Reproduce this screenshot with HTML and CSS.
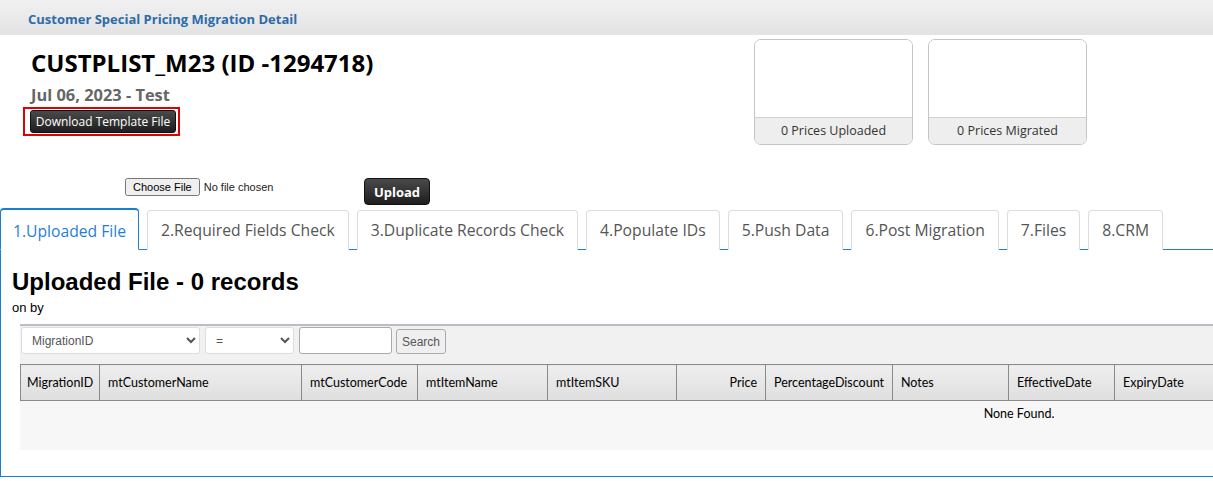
FILE: index.html
```html
<!DOCTYPE html>
<html lang="en">
<head>
  <meta charset="UTF-8">
  <title>Customer Special Pricing Migration Detail</title>
  <link rel="stylesheet" href="styles.css">
</head>
<body>
  <div class="page-header">Customer Special Pricing Migration Detail</div>

  <div class="summary">
    <div class="info">
      <h1 class="list-name">CUSTPLIST_M23 (ID -1294718)</h1>
      <div class="list-date">Jul 06, 2023 - Test</div>
      <div class="highlight">
        <button class="dark-btn small">Download Template File</button>
      </div>
    </div>
    <div class="stats">
      <div class="stat-box">
        <div class="stat-body"></div>
        <div class="stat-foot">0 Prices Uploaded</div>
      </div>
      <div class="stat-box">
        <div class="stat-body"></div>
        <div class="stat-foot">0 Prices Migrated</div>
      </div>
    </div>
  </div>

  <div class="upload-row">
    <input type="file" class="file-input">
    <button class="dark-btn upload">Upload</button>
  </div>

  <ul class="tabs">
    <li class="tab active">1.Uploaded File</li>
    <li class="tab">2.Required Fields Check</li>
    <li class="tab">3.Duplicate Records Check</li>
    <li class="tab">4.Populate IDs</li>
    <li class="tab">5.Push Data</li>
    <li class="tab">6.Post Migration</li>
    <li class="tab">7.Files</li>
    <li class="tab">8.CRM</li>
  </ul>

  <div class="tab-panel">
    <h2 class="panel-title">Uploaded File - 0 records</h2>
    <div class="panel-sub">on by</div>

    <div class="grid">
      <div class="filter-bar">
        <select class="field-select"><option>MigrationID</option></select>
        <select class="op-select"><option>=</option></select>
        <input type="text" class="search-input">
        <button class="search-btn">Search</button>
      </div>
      <table class="data-table">
        <thead>
          <tr>
            <th style="width:79px">MigrationID</th>
            <th style="width:202px">mtCustomerName</th>
            <th style="width:116px">mtCustomerCode</th>
            <th style="width:130px">mtItemName</th>
            <th style="width:129px">mtItemSKU</th>
            <th class="num" style="width:89px">Price</th>
            <th style="width:127px">PercentageDiscount</th>
            <th style="width:116px">Notes</th>
            <th style="width:106px">EffectiveDate</th>
            <th>ExpiryDate</th>
          </tr>
        </thead>
        <tbody>
          <tr><td colspan="10" class="empty">None Found.</td></tr>
        </tbody>
      </table>
    </div>
  </div>
</body>
</html>
```

FILE: styles.css
```css
* { box-sizing: border-box; }
body {
  margin: 0; width: 1213px; overflow: hidden;
  font-family: "Open Sans", "Liberation Sans", sans-serif;
  color: #222; background: #fff;
}

/* top title strip */
.page-header {
  height: 35px; padding: 10px 0 0 28px;
  background: linear-gradient(#f1f1f1, #e3e3e3);
  color: #2d6ca8; font-weight: bold; font-size: 13px;
}

/* name, date and counters */
.summary { display: flex; height: 143px; }
.info { width: 754px; padding: 13px 0 0 23px; }
.list-name {
  margin: 0 0 0 8px; font-size: 24px; line-height: 30px; font-weight: bold; color: #000;
}
.list-date {
  margin: 8px 0 0 8px; font-size: 16.4px; font-weight: bold; color: #666; line-height: 18px;
}
.highlight {
  display: inline-block; margin-top: 3px; padding: 1px 2px 1px 5px;
  border: 2px solid #e00000;
}
.dark-btn {
  background: linear-gradient(#4a4a4a, #1e1e1e);
  color: #fff; border: 1px solid #111; border-radius: 3px;
  font-family: "Open Sans", sans-serif; cursor: pointer;
}
.dark-btn.small { display: block; font-size: 12px; height: 23px; width: 146px; padding: 0; }

.stats { display: flex; gap: 15px; padding-top: 4px; }
.stat-box {
  width: 159px; height: 106px; display: flex; flex-direction: column;
  border: 1px solid #c4c4c4; border-radius: 7px; overflow: hidden;
}
.stat-body { flex: 1; background: #fff; }
.stat-foot {
  height: 27px; line-height: 25px; text-align: center;
  background: #eee; border-top: 1px solid #d0d0d0;
  font-size: 12.5px; color: #333;
}

/* file picker */
.upload-row { display: flex; align-items: flex-start; height: 30px; padding-left: 125px; }
.file-input { font-size: 11px; width: 237px; font-family: "Liberation Sans", sans-serif; }
.dark-btn.upload {
  margin-left: 2px; width: 66px; height: 27px; border-radius: 4px;
  font-size: 13px; font-weight: bold;
}

/* tabs */
.tabs {
  display: flex; gap: 8px; margin: 0; padding: 0; list-style: none;
  border-bottom: 1px solid #1a7fd0; height: 42px;
}
.tab {
  margin-top: 2px; height: 40px; padding: 0 13px; line-height: 38px;
  border: 1px solid #ddd; border-bottom: none; border-radius: 4px 4px 0 0;
  font-size: 15.7px; color: #555; background: #fff; white-space: nowrap;
}
.tab.active {
  margin-top: 0; height: 42px; padding: 2px 0 0; text-align: center;
  border: 1px solid #1a7fd0; border-top-width: 2px; border-bottom: 1px solid #fff;
  color: #1f7fd6; width: 139px;
}

/* panel */
.tab-panel {
  height: 227px; padding: 18px 0 0 11px;
  border-left: 1px solid #1a7fd0; border-bottom: 1px solid #1a7fd0;
  font-family: "Liberation Sans", sans-serif;
}
.panel-title { margin: 0; font-size: 24px; line-height: 28px; color: #000; }
.panel-sub { font-size: 13px; margin-top: 4px; color: #000; }

.grid { margin: 9px 0 0 8px; width: 2000px; background: #f7f7f7; height: 126px; }
.filter-bar {
  display: flex; align-items: flex-start; gap: 5px; height: 40px; padding: 1px 1px 0;
  border-top: 2px solid #b9bdc8; background: #f1f1f1;
}
.filter-bar select, .search-input {
  height: 27px; border: 1px solid #ddd; border-radius: 3px; background: #fff;
  font-size: 12px; color: #555; padding: 0 6px;
}
.field-select { width: 179px; }
.op-select { width: 89px; }
.search-input { width: 93px; border-color: #aaa; }
.search-btn {
  height: 25px; width: 50px; padding: 0; margin: 2px 0 0 -1px;
  border: 1px solid #aaa; border-radius: 3px; background: #efefef;
  font-size: 12px; color: #555; font-family: "Liberation Sans", sans-serif;
}

.data-table {
  width: 1998px; border-collapse: collapse; table-layout: fixed;
  font-family: Lato, "Liberation Sans", sans-serif; font-size: 12.5px;
}
.data-table th {
  height: 36px; padding: 0 8px; text-align: left; font-weight: normal; color: #000;
  background: linear-gradient(#efefef, #dedede);
  border: 1px solid #8a8a8a; white-space: nowrap; overflow: hidden;
}
.data-table th.num { text-align: right; }
.data-table th:first-child { padding: 0 6px; }
.empty { text-align: center; padding: 5px 0 0; height: 48px; vertical-align: top; color: #000; }
```
